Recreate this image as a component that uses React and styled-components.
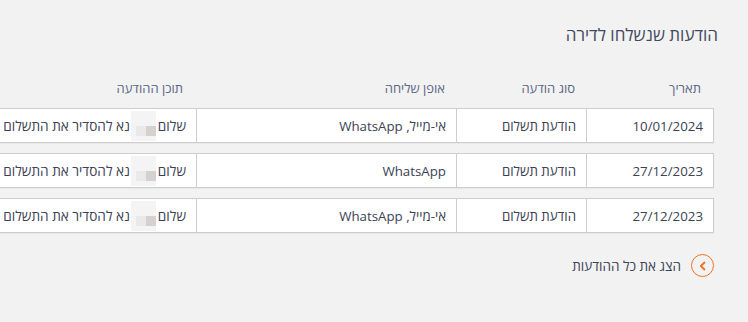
import styled, { createGlobalStyle } from 'styled-components';

const GlobalStyle = createGlobalStyle`
  html, body {
    margin: 0;
    padding: 0;
    background: #f2f2f2;
    overflow: hidden;
  }
  body {
    font-family: "Open Sans", "DejaVu Sans", sans-serif;
  }
`;

const rows = [
  { date: '10/01/2024', type: 'הודעת תשלום', method: 'אי-מייל, WhatsApp' },
  { date: '27/12/2023', type: 'הודעת תשלום', method: 'WhatsApp' },
  { date: '27/12/2023', type: 'הודעת תשלום', method: 'אי-מייל, WhatsApp' },
];

export default function App() {
  return (
    <Page dir="rtl">
      <GlobalStyle />
      <Title>הודעות שנשלחו לדירה</Title>
      <Table>
        <HeadRow>
          <HeadCell>תאריך</HeadCell>
          <HeadCell>סוג הודעה</HeadCell>
          <HeadCell>אופן שליחה</HeadCell>
          <HeadCell $pad={15}>תוכן ההודעה</HeadCell>
        </HeadRow>
        {rows.map((r, i) => (
          <Row key={i}>
            <Cell>{r.date}</Cell>
            <Cell>{r.type}</Cell>
            <Cell>{r.method}</Cell>
            <Cell $big>
              שלום<Blur />נא להסדיר את התשלום
            </Cell>
          </Row>
        ))}
      </Table>
      <ShowAll>
        <Circle>
          <svg width="12" height="12" viewBox="0 0 12 12">
            <path d="M7.5 2.5 L3.8 6 L7.5 9.5" fill="none" stroke="#f26f21" strokeWidth="1.8" strokeLinecap="round" strokeLinejoin="round" />
          </svg>
        </Circle>
        <span>הצג את כל ההודעות</span>
      </ShowAll>
    </Page>
  );
}

const Page = styled.div`
  padding: 25px 30px 0 0;
  color: #3c4254;
`;

const Title = styled.h2`
  margin: 0;
  font-size: 17px;
  font-weight: 400;
  color: #3f4a5c;
  line-height: 20px;
`;

const Table = styled.div`
  margin-top: 33px;
  margin-right: 4px;
  display: flex;
  flex-direction: column;
  gap: 10px;
`;

const cols = `126px 130px 260px 260px`;

const HeadRow = styled.div`
  display: grid;
  grid-template-columns: ${cols};
  width: max-content;
`;

const HeadCell = styled.div`
  padding-right: ${(p) => p.$pad ?? 13}px;
  font-size: 13px;
  color: #5a6884;
  line-height: 20px;
`;

const Row = styled.div`
  display: grid;
  grid-template-columns: ${cols};
  width: max-content;
  background: #fff;
  border: 1px solid #cdcdcd;
  box-shadow: 0 1px 1px rgba(0, 0, 0, 0.04);
`;

const Cell = styled.div`
  height: 33px;
  display: flex;
  align-items: center;
  padding-right: 10px;
  font-size: ${(p) => (p.$big ? 13.6 : 13.3)}px;
  color: #3c4254;
  white-space: nowrap;
  & + & {
    border-right: 1px solid #cdcdcd;
  }
`;

const Blur = styled.span`
  display: inline-block;
  flex: none;
  width: 25px;
  height: 30px;
  margin: 2px 2px 0 1px;
  align-self: flex-start;
  background:
    linear-gradient(#d5d1d1, #d5d1d1) 15px 15px / 10px 10px no-repeat,
    linear-gradient(#e9e9e9, #e9e9e9) 5px 15px / 10px 10px no-repeat,
    #f4f4f5;
`;

const ShowAll = styled.div`
  margin-top: 21px;
  margin-right: 4px;
  display: flex;
  align-items: center;
  gap: 10px;
  font-size: 13.5px;
  color: #3c4254;
`;

const Circle = styled.span`
  width: 21px;
  height: 21px;
  border: 1.5px solid #f26f21;
  border-radius: 50%;
  display: flex;
  align-items: center;
  justify-content: center;
`;
